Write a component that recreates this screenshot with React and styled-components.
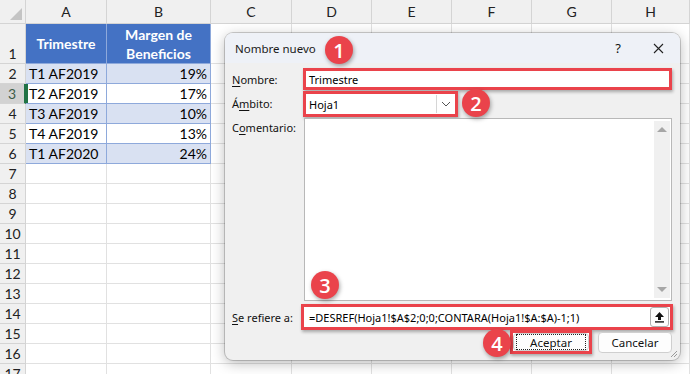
import React from 'react'
import styled, { createGlobalStyle } from 'styled-components'

const GlobalStyle = createGlobalStyle`
    html, body {
        margin: 0;
        padding: 0;
        background: #ffffff;
        overflow: hidden;
    }
`

const Page = styled.div`
    position: relative;
    width: 690px;
    height: 374px;
    overflow: hidden;
    font-family: Lato, "Liberation Sans", sans-serif;
`

const Sheet = styled.div`
    display: grid;
    grid-template-columns: 26px 81px 104px 81px 80px 80px 80px 80px 78px;
    grid-template-rows: 24px 40px repeat(16, 20px);
`

const Corner = styled.div`
    position: relative;
    background: #f0f0f0;
    border-right: 1px solid #d4d4d4;
    border-bottom: 1px solid #d4d4d4;
    &::after{
        content: '';
        position: absolute;
        right: 3px;
        bottom: 3px;
        border-left: 12px solid transparent;
        border-bottom: 12px solid #c4c4c4;
    }
`

const ColHead = styled.div`
    display: flex;
    align-items: center;
    justify-content: center;
    background: #f0f0f0;
    border-right: 1px solid #d4d4d4;
    border-bottom: 1px solid #d4d4d4;
    font-size: 14px;
    color: #222;
`

const RowHead = styled.div`
    display: flex;
    align-items: flex-end;
    justify-content: center;
    padding-bottom: 1px;
    box-sizing: border-box;
    background: ${p => p.$sel ? '#d2d2d2' : '#f0f0f0'};
    border-right: ${p => p.$sel ? '2px solid #217346' : '1px solid #d4d4d4'};
    border-bottom: 1px solid #d4d4d4;
    font-size: 14px;
    color: ${p => p.$sel ? '#3d5c48' : '#222'};
`

const Cell = styled.div`
    box-sizing: border-box;
    display: flex;
    align-items: center;
    justify-content: ${p => p.$right ? 'flex-end' : 'flex-start'};
    padding: 0 3px;
    font-size: 14px;
    color: #000;
    border-right: 1px solid ${p => p.$band ? '#8ea9db' : '#e1e1e1'};
    border-bottom: 1px solid ${p => p.$band ? '#8ea9db' : '#e1e1e1'};
    background: ${p => p.$band === 'blue' ? '#d9e1f2' : '#ffffff'};
    ${p => p.$green ? 'box-shadow: inset 2px 0 0 #217346;' : ''}
`

const HeadCell = styled.div`
    box-sizing: border-box;
    display: flex;
    align-items: center;
    justify-content: center;
    text-align: center;
    background: #4472c4;
    color: #ffffff;
    font-weight: 700;
    font-size: 14px;
    line-height: 19px;
    border-right: 1px solid #8ea9db;
    border-bottom: 1px solid #8ea9db;
`

const Dialog = styled.div`
    position: absolute;
    left: 225px;
    top: 33px;
    width: 455px;
    height: 327px;
    border-radius: 8px;
    background: #f0f0f0;
    box-shadow: 0 0 0 1px rgba(0, 0, 0, 0.18), 0 3px 14px rgba(0, 0, 0, 0.28);
    font-family: "Noto Sans", "Liberation Sans", sans-serif;
    font-size: 11px;
    color: #111;
    display: flex;
    flex-direction: column;
    overflow: hidden;
`

const TitleBar = styled.div`
    height: 30px;
    flex: none;
    display: flex;
    align-items: center;
    padding: 0 16px 0 10px;
    background: #eef1f7;
`

const Title = styled.div`
    flex: 1;
    font-size: 11.5px;
    color: #1a1a1a;
`

const TitleIcons = styled.div`
    display: flex;
    align-items: center;
    gap: 32px;
    font-size: 13px;
`

const Body = styled.div`
    flex: 1;
    display: flex;
    flex-direction: column;
    padding: 5px 8px 6px 7px;
`

const FieldRow = styled.div`
    display: grid;
    grid-template-columns: 71px 1fr;
    height: ${p => p.$h}px;
    margin-top: ${p => p.$mt || 0}px;
    flex: none;
`

const Label = styled.div`
    padding-top: ${p => p.$pt || 0}px;
    align-self: ${p => p.$center ? 'center' : 'start'};
    white-space: nowrap;
    u{
        text-decoration-thickness: 1px;
        text-underline-offset: 2px;
    }
`

const Highlight = styled.div`
    box-sizing: border-box;
    display: flex;
    border: 3px solid #ea434b;
    box-shadow: 1px 2px 3px rgba(0, 0, 0, 0.3);
    width: ${p => p.$w ? p.$w + 'px' : 'auto'};
    margin: ${p => p.$m || '0'};
    background: #ffffff;
`

const TextBox = styled.div`
    flex: 1;
    display: flex;
    align-items: center;
    padding-left: ${p => p.$pl || 3}px;
    background: #ffffff;
    font-size: 11px;
    color: #000;
    white-space: nowrap;
`

const DropZone = styled.div`
    width: 18px;
    display: flex;
    align-items: center;
    justify-content: center;
    border-left: 1px solid #d6d6d6;
    margin: 1px 0;
`

const Memo = styled.div`
    box-sizing: border-box;
    display: flex;
    justify-content: flex-end;
    margin-left: 1px;
    background: #ffffff;
    border: 1px solid #b8b8b8;
`

const ScrollBar = styled.div`
    width: 16px;
    margin: 2px 1px 2px 0;
    background: #f0f0f0;
    display: flex;
    flex-direction: column;
    justify-content: space-between;
    align-items: center;
    padding: 6px 0;
    box-sizing: border-box;
`

const Arrow = styled.div`
    width: 0;
    height: 0;
    border-left: 5px solid transparent;
    border-right: 5px solid transparent;
    ${p => p.$down ? 'border-top: 5px solid #a6a6a6;' : 'border-bottom: 5px solid #a6a6a6;'}
`

const CollapseBtn = styled.div`
    width: 17px;
    margin: 0 1px 0 0;
    display: flex;
    align-items: center;
    justify-content: center;
    border: 1px solid #b0b0b0;
    border-radius: 3px;
    background: #fdfdfd;
`

const Buttons = styled.div`
    display: flex;
    justify-content: flex-end;
    align-items: center;
    gap: 6px;
    height: 24px;
    flex: none;
`

const Button = styled.div`
    box-sizing: border-box;
    width: ${p => p.$w}px;
    height: ${p => p.$h}px;
    display: flex;
    align-items: center;
    justify-content: center;
    background: #fdfdfd;
    border: 1px solid #cfcfcf;
    border-radius: 4px;
    font-size: 11.5px;
    color: #111;
`

const FocusText = styled.span`
    display: flex;
    align-items: center;
    justify-content: center;
    width: 100%;
    height: 100%;
    box-sizing: border-box;
    border: 1px dotted #222;
    margin: 2px;
`

const Grip = styled.svg`
    position: absolute;
    right: 2px;
    bottom: 2px;
`

const Badge = styled.div`
    position: absolute;
    left: ${p => p.$x - 14}px;
    top: ${p => p.$y - 14}px;
    width: 28px;
    height: 28px;
    border-radius: 50%;
    background: #ea434b;
    color: #fff;
    display: flex;
    align-items: center;
    justify-content: center;
    font-family: "Open Sans", "Liberation Sans", sans-serif;
    font-weight: 600;
    font-size: 20px;
    box-shadow: 1px 2px 4px rgba(0, 0, 0, 0.35);
`

const cols = ['A', 'B', 'C', 'D', 'E', 'F', 'G', 'H']
const data = [
    ['T1 AF2019', '19%'],
    ['T2 AF2019', '17%'],
    ['T3 AF2019', '10%'],
    ['T4 AF2019', '13%'],
    ['T1 AF2020', '24%'],
]

function Spreadsheet() {
    const cells = []
    cells.push(<Corner key="corner" />)
    cols.forEach(c => cells.push(<ColHead key={'h' + c}>{c}</ColHead>))
    for (let r = 1; r <= 17; r++) {
        cells.push(<RowHead key={'r' + r} $sel={r === 3}>{r}</RowHead>)
        cols.forEach((c, i) => {
            const k = c + r
            if (r === 1 && i === 0) cells.push(<HeadCell key={k}>Trimestre</HeadCell>)
            else if (r === 1 && i === 1) cells.push(<HeadCell key={k}>Margen de<br />Beneficios</HeadCell>)
            else if (r >= 2 && r <= 6 && i < 2) {
                const band = r % 2 === 0 ? 'blue' : 'white'
                cells.push(
                    <Cell key={k} $band={band} $right={i === 1} $green={r === 3 && i === 0}>
                        {data[r - 2][i]}
                    </Cell>
                )
            } else cells.push(<Cell key={k} />)
        })
    }
    return <Sheet>{cells}</Sheet>
}

function NameDialog() {
    return (
        <Dialog>
            <TitleBar>
                <Title>Nombre nuevo</Title>
                <TitleIcons>
                    <span>?</span>
                    <svg width="11" height="11" viewBox="0 0 11 11">
                        <path d="M1 1 L10 10 M10 1 L1 10" stroke="#222" strokeWidth="1.1" />
                    </svg>
                </TitleIcons>
            </TitleBar>
            <Body>
                <FieldRow $h={22}>
                    <Label $center><u>N</u>ombre:</Label>
                    <Highlight>
                        <TextBox>Trimestre</TextBox>
                    </Highlight>
                </FieldRow>
                <FieldRow $h={26} $mt={1}>
                    <Label $pt={5}>Á<u>m</u>bito:</Label>
                    <Highlight $w={155}>
                        <TextBox>Hoja1</TextBox>
                        <DropZone>
                            <svg width="10" height="6" viewBox="0 0 10 6">
                                <path d="M1 1 L5 5 L9 1" fill="none" stroke="#555" strokeWidth="1" />
                            </svg>
                        </DropZone>
                    </Highlight>
                </FieldRow>
                <FieldRow $h={183} $mt={1}>
                    <Label $pt={2}>C<u>o</u>mentario:</Label>
                    <Memo>
                        <ScrollBar>
                            <Arrow />
                            <Arrow $down />
                        </ScrollBar>
                    </Memo>
                </FieldRow>
                <FieldRow $h={26} $mt={3}>
                    <Label $center><u>S</u>e refiere a:</Label>
                    <Highlight $m="0 -1px 0 -2px">
                        <TextBox $pl={5}>=DESREF(Hoja1!$A$2;0;0;CONTARA(Hoja1!$A:$A)-1;1)</TextBox>
                        <CollapseBtn>
                            <svg width="11" height="12" viewBox="0 0 11 12">
                                <path d="M5.5 1 L10 6 L7 6 L7 9 L4 9 L4 6 L1 6 Z" fill="#111" />
                                <rect x="1" y="10.2" width="9" height="1.4" fill="#111" />
                            </svg>
                        </CollapseBtn>
                    </Highlight>
                </FieldRow>
                <Buttons>
                    <Highlight $w={82} style={{ height: 24, padding: 0 }}>
                        <Button $w={76} $h={18}>
                            <FocusText>Aceptar</FocusText>
                        </Button>
                    </Highlight>
                    <Button $w={74} $h={21}>Cancelar</Button>
                </Buttons>
            </Body>
            <Grip width="8" height="8" viewBox="0 0 8 8">
                <path d="M7 1 L1 7 M7 4 L4 7" stroke="#9a9a9a" strokeWidth="1" />
            </Grip>
        </Dialog>
    )
}

export default function App() {
    return (
        <Page>
            <GlobalStyle />
            <Spreadsheet />
            <NameDialog />
            <Badge $x={339} $y={50}>1</Badge>
            <Badge $x={476} $y={103}>2</Badge>
            <Badge $x={325} $y={285}>3</Badge>
            <Badge $x={497} $y={343}>4</Badge>
        </Page>
    )
}
